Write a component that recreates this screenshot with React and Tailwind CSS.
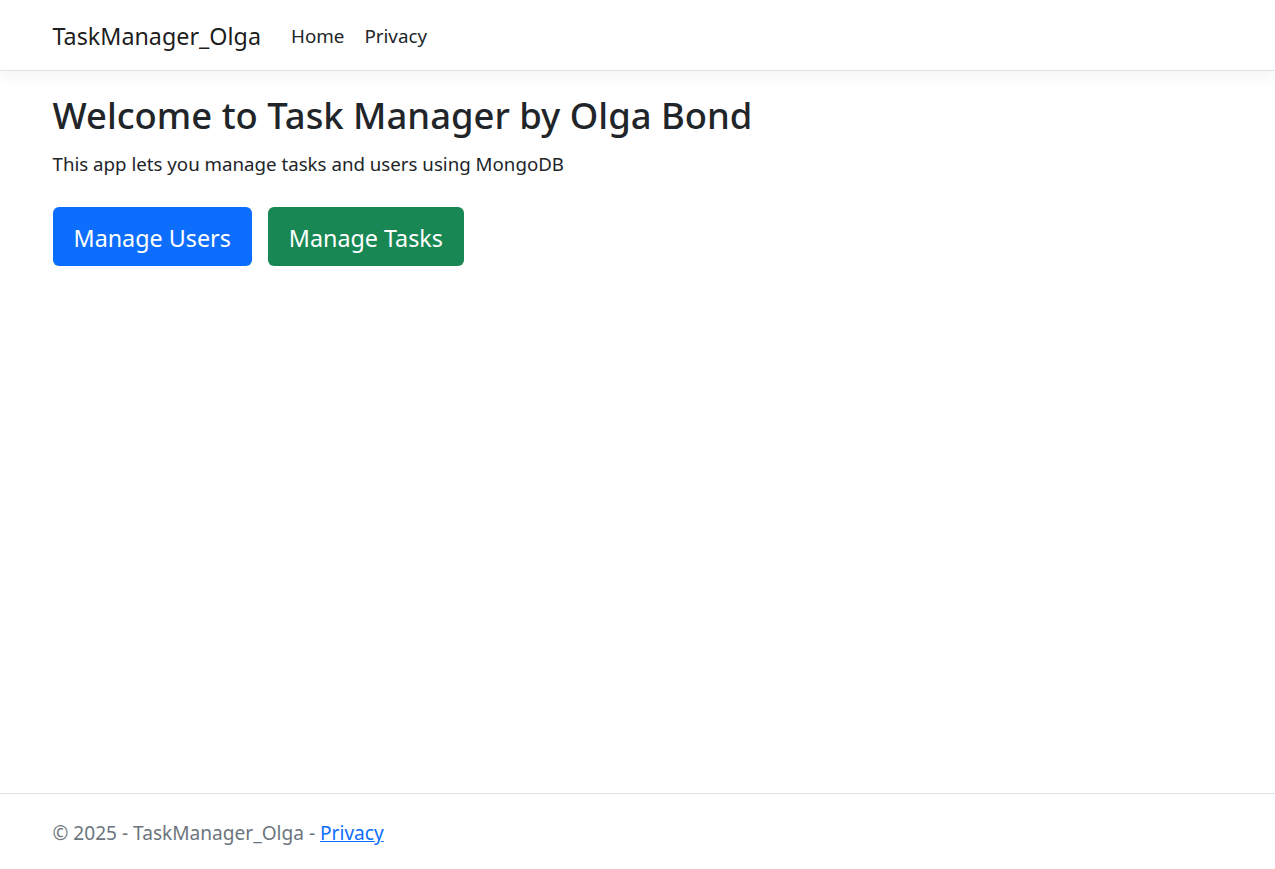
export default function App() {
  const font = { fontFamily: '"Noto Sans", "Open Sans", sans-serif' }
  return (
    <div className="relative min-h-[869px] bg-white text-[#212529]" style={font}>
      <header>
        <nav className="h-[71px] border-b border-[#dee2e6] bg-white shadow-[0_5px_15px_rgba(0,0,0,0.05)]">
          <div className="mx-auto flex h-[70px] w-[1200px] items-center px-[15px] pt-[2px]">
            <a className="mr-[20px] text-[23.3px] leading-[38px] text-black/90">TaskManager_Olga</a>
            <ul className="flex items-center">
              <li className="px-[10px] text-[18.8px] text-[#212529]">Home</li>
              <li className="px-[10px] text-[18.8px] text-[#212529]">Privacy</li>
            </ul>
          </div>
        </nav>
      </header>

      <div className="mx-auto w-[1200px] px-[15px]">
        <main className="pt-[19px] pb-[20px]">
          <h1 className="mb-[9px] text-[36.4px] font-medium leading-[50px]">Welcome to Task Manager by Olga Bond</h1>
          <p className="mb-[20px] text-[18.7px] leading-[30px]">This app lets you manage tasks and users using MongoDB</p>
          <div className="flex gap-[16px] pt-[8px]">
            <button className="h-[59px] rounded-[6px] bg-[#0d6efd] px-[21px] pt-[3px] text-[23.3px] text-white">Manage Users</button>
            <button className="h-[59px] rounded-[6px] bg-[#198754] px-[21px] pt-[3px] text-[23.3px] text-white">Manage Tasks</button>
          </div>
        </main>
      </div>

      <footer className="absolute bottom-0 left-0 right-0 h-[76px] border-t border-[#dee2e6] text-[#6c757d]">
        <div className="mx-auto w-[1200px] px-[15px] text-[19.1px] leading-[79px] whitespace-nowrap">
          © 2025 - TaskManager_Olga - <a className="text-[#0d6efd] underline">Privacy</a>
        </div>
      </footer>
    </div>
  )
}
